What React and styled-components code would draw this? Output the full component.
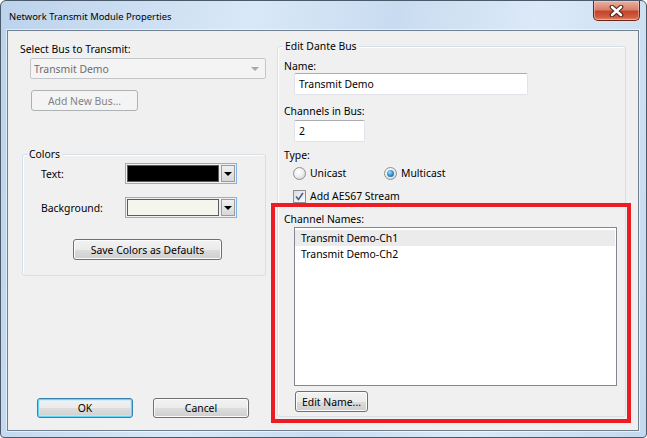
import React from "react";
import styled, { createGlobalStyle, css } from "styled-components";

const Global = createGlobalStyle`
  html, body { margin: 0; padding: 0; background: #ffffff; }
  body { font-family: "Noto Sans", "Open Sans", sans-serif; font-size: 10.5px; color: #000; }
  * { box-sizing: border-box; }
`;

const UI_FONT = `"Noto Sans", "Open Sans", sans-serif`;
const UI_SIZE = "10.4px";

const Window = styled.div`
  width: 647px;
  height: 438px;
  border: 1px solid #4b5a6b;
  border-radius: 6px 6px 4px 4px;
  background: linear-gradient(100deg, #bcd3ec 0%, #d9e8f7 35%, #c8dcf1 55%, #dce9f7 75%, #c4d9ef 100%);
  display: flex;
  flex-direction: column;
  overflow: hidden;
  font-family: ${UI_FONT};
`;

const TitleBar = styled.div`
  height: 29px;
  display: flex;
  align-items: flex-start;
  flex: none;
`;

const Title = styled.div`
  margin: 9px 0 0 8px;
  font-size: 9.4px;
  line-height: 14px;
  color: #000;
`;

const CloseButton = styled.div`
  margin-left: auto;
  margin-right: 6px;
  width: 47px;
  height: 20px;
  border: 1px solid #6b2417;
  border-top: none;
  border-radius: 0 0 5px 5px;
  background: linear-gradient(#eab1a4 0%, #d9806a 45%, #c4452c 55%, #d25d3f 85%, #e48b6c 100%);
  box-shadow: inset 0 0 0 1px rgba(255, 220, 210, 0.45);
  display: flex;
  align-items: center;
  justify-content: center;
`;

const Client = styled.div`
  margin: 0 7px 6px 6px;
  height: 401px;
  border: 1px solid #707f8f;
  background: #f0f0f0;
  box-shadow: 0 0 0 1px rgba(255, 255, 255, 0.55);
  display: flex;
`;

const LeftCol = styled.div`
  width: 263px;
  display: flex;
  flex-direction: column;
  align-items: flex-start;
  padding-top: 11px;
`;

const RightCol = styled.div`
  position: relative;
  flex: 1;
  display: flex;
  flex-direction: column;
  align-items: flex-start;
`;

const Label = styled.div`
  font-size: ${UI_SIZE};
  line-height: 14px;
  white-space: nowrap;
  color: ${(p) => (p.$muted ? "#6d6d6d" : "#000")};
  margin-left: ${(p) => p.$ml || 0}px;
  margin-top: ${(p) => p.$mt || 0}px;
`;

const Combo = styled.div`
  margin: 2px 0 0 22px;
  width: 236px;
  height: 21px;
  border: 1px solid #c3c6c9;
  border-radius: 2px;
  background: #f4f4f4;
  display: flex;
  align-items: center;
  padding: 0 6px 0 3px;
  font-size: ${UI_SIZE};
  color: #6d6d6d;
`;

const ComboArrow = styled.span`
  margin-left: auto;
  width: 0;
  height: 0;
  border-left: 4px solid transparent;
  border-right: 4px solid transparent;
  border-top: 4px solid #a8a8a8;
`;

const buttonBase = css`
  height: ${(p) => p.$h || 21}px;
  width: ${(p) => p.$w}px;
  border-radius: 3px;
  font-family: ${UI_FONT};
  font-size: ${UI_SIZE};
  display: flex;
  align-items: center;
  justify-content: center;
  white-space: nowrap;
  flex: none;
`;

const Button = styled.div`
  ${buttonBase};
  border: 1px solid #707070;
  background: linear-gradient(#f2f2f2 0%, #ebebeb 50%, #dddddd 51%, #cfcfcf 100%);
  box-shadow: inset 0 0 0 1px #fbfbfb;
  color: #000;
  margin-left: ${(p) => p.$ml || 0}px;
  margin-top: ${(p) => p.$mt || 0}px;
  ${(p) =>
    p.$default &&
    css`
      border-color: #3c7fb1;
      box-shadow: inset 0 0 0 1px #62d6f8, inset 0 0 0 2px rgba(190, 235, 250, 0.6);
    `}
  ${(p) =>
    p.$disabled &&
    css`
      border-color: #adb2b5;
      background: #f4f4f4;
      box-shadow: none;
      color: #838383;
    `}
`;

const Group = styled.div`
  position: relative;
  border: 1px solid #d5dfe5;
  border-radius: 3px;
  box-shadow: inset 1px 1px 0 #ffffff;
  margin-left: ${(p) => p.$ml}px;
  margin-top: ${(p) => p.$mt}px;
  width: ${(p) => p.$w}px;
  height: ${(p) => p.$h}px;
  display: flex;
  flex-direction: column;
  align-items: flex-start;
  padding: ${(p) => p.$pad || "0"};
`;

const Legend = styled.span`
  position: absolute;
  top: -8px;
  left: ${(p) => p.$left || 5}px;
  padding: 0 2px;
  background: #f0f0f0;
  font-size: ${UI_SIZE};
  line-height: 14px;
`;

const ColorGrid = styled.div`
  display: grid;
  grid-template-columns: 84px 112px;
  row-gap: 13px;
  align-items: center;
  margin-left: 18px;
`;

const ColorCombo = styled.div`
  height: 21px;
  border: 1px solid #7eb4ea;
  padding: 1px;
  display: flex;
  gap: 2px;
`;

const Swatch = styled.div`
  flex: 1;
  border: 1px solid #5c5c5c;
  background: ${(p) => p.$color};
`;

const DropBtn = styled.div`
  width: 14px;
  border: 1px solid #9a9a9a;
  background: linear-gradient(#f0f0f0, #d8d8d8);
  display: flex;
  align-items: center;
  justify-content: center;
  &::after {
    content: "";
    border-left: 4px solid transparent;
    border-right: 4px solid transparent;
    border-top: 4px solid #000;
  }
`;

const ButtonRow = styled.div`
  margin-top: auto;
  margin-bottom: 12px;
  margin-left: 29px;
  display: flex;
  gap: 20px;
`;

const TextBox = styled.div`
  width: ${(p) => p.$w}px;
  height: 22px;
  margin-left: 16px;
  margin-top: ${(p) => p.$mt || 0}px;
  border: 1px solid #e2e3ea;
  border-top-color: #abadb3;
  border-radius: 2px;
  background: #fff;
  display: flex;
  align-items: center;
  padding-left: 4px;
  font-size: ${UI_SIZE};
`;

const OptionRow = styled.div`
  display: flex;
  align-items: center;
  height: 14px;
  margin-left: 15px;
  margin-top: ${(p) => p.$mt || 0}px;
`;

const Option = styled.label`
  display: flex;
  align-items: center;
  gap: 4px;
  width: ${(p) => (p.$w ? `${p.$w}px` : "auto")};
  font-size: ${UI_SIZE};
  line-height: 14px;
`;

const Radio = styled.span`
  width: 13px;
  height: 13px;
  border-radius: 50%;
  border: 1px solid #8e8f8f;
  background: radial-gradient(circle at 40% 35%, #ffffff 0%, #f0f0f0 45%, #c9c9c9 100%);
  display: flex;
  align-items: center;
  justify-content: center;
  &::after {
    content: "";
    display: ${(p) => (p.$on ? "block" : "none")};
    width: 7px;
    height: 7px;
    border-radius: 50%;
    background: radial-gradient(circle at 40% 35%, #a8e2fb 0%, #3596d7 45%, #134e8f 100%);
  }
`;

const Check = styled.span`
  width: 13px;
  height: 13px;
  border: 1px solid #8e8f8f;
  background: linear-gradient(135deg, #dcdcdc, #fdfdfd);
  display: flex;
  align-items: center;
  justify-content: center;
`;

const ListBox = styled.div`
  margin: 1px 0 0 16px;
  width: 323px;
  height: 159px;
  border: 1px solid #828790;
  background: #fff;
  padding-top: 2px;
  display: flex;
  flex-direction: column;
`;

const ListItem = styled.div`
  height: 16px;
  line-height: 16px;
  padding-left: 6px;
  margin-right: 1px;
  font-size: ${UI_SIZE};
  background: ${(p) => (p.$selected ? "#ebebeb" : "transparent")};
`;

const Highlight = styled.div`
  position: absolute;
  left: 0;
  top: 172px;
  width: 360px;
  height: 220px;
  border: 4px solid #ed1c24;
  pointer-events: none;
`;

const channels = ["Transmit Demo-Ch1", "Transmit Demo-Ch2"];

export default function App() {
  return (
    <>
      <Global />
      <Window>
        <TitleBar>
          <Title>Network Transmit Module Properties</Title>
          <CloseButton>
            <svg width="15" height="12" viewBox="0 0 15 12">
              <path d="M3 2 L12 10 M12 2 L3 10" stroke="#4a2018" strokeWidth="4.6" strokeLinecap="round" />
              <path d="M3 2 L12 10 M12 2 L3 10" stroke="#ffffff" strokeWidth="2.6" strokeLinecap="round" />
            </svg>
          </CloseButton>
        </TitleBar>
        <Client>
          <LeftCol>
            <Label $ml={12}>Select Bus to Transmit:</Label>
            <Combo>
              Transmit Demo
              <ComboArrow />
            </Combo>
            <Button $disabled $w={107} $ml={23} $mt={11}>
              Add New Bus...
            </Button>
            <Group $ml={14} $mt={43} $w={244} $h={122} $pad="8px 0 0 0">
              <Legend $left={4}>Colors</Legend>
              <ColorGrid>
                <Label>Text:</Label>
                <ColorCombo>
                  <Swatch $color="#000000" />
                  <DropBtn />
                </ColorCombo>
                <Label>Background:</Label>
                <ColorCombo>
                  <Swatch $color="#f4f5ec" />
                  <DropBtn />
                </ColorCombo>
              </ColorGrid>
              <Button $w={149} $ml={50} $mt={21}>
                Save Colors as Defaults
              </Button>
            </Group>
            <ButtonRow>
              <Button $default $w={96} $h={20}>
                OK
              </Button>
              <Button $w={96} $h={20}>
                Cancel
              </Button>
            </ButtonRow>
          </LeftCol>
          <RightCol>
            <Group $ml={6} $mt={15} $w={349} $h={371} $pad="12px 0 0 0">
              <Legend>Edit Dante Bus</Legend>
              <Label $ml={6}>Name:</Label>
              <TextBox $w={234}>Transmit Demo</TextBox>
              <Label $ml={6} $mt={9}>Channels in Bus:</Label>
              <TextBox $w={71} $mt={2}>2</TextBox>
              <Label $ml={6} $mt={6}>Type:</Label>
              <OptionRow $mt={4}>
                <Option $w={91}>
                  <Radio />
                  Unicast
                </Option>
                <Option>
                  <Radio $on />
                  Multicast
                </Option>
              </OptionRow>
              <OptionRow $mt={9}>
                <Option>
                  <Check>
                    <svg width="9" height="9" viewBox="0 0 9 9">
                      <path d="M1 4.5 L3.5 7.5 L8 1" fill="none" stroke="#4a5f97" strokeWidth="1.6" />
                    </svg>
                  </Check>
                  Add AES67 Stream
                </Option>
              </OptionRow>
              <Label $ml={6} $mt={9}>Channel Names:</Label>
              <ListBox>
                {channels.map((c, i) => (
                  <ListItem key={c} $selected={i === 0}>
                    {c}
                  </ListItem>
                ))}
              </ListBox>
              <Button $w={73} $ml={17} $mt={5}>
                Edit Name...
              </Button>
            </Group>
            <Highlight />
          </RightCol>
        </Client>
      </Window>
    </>
  );
}
